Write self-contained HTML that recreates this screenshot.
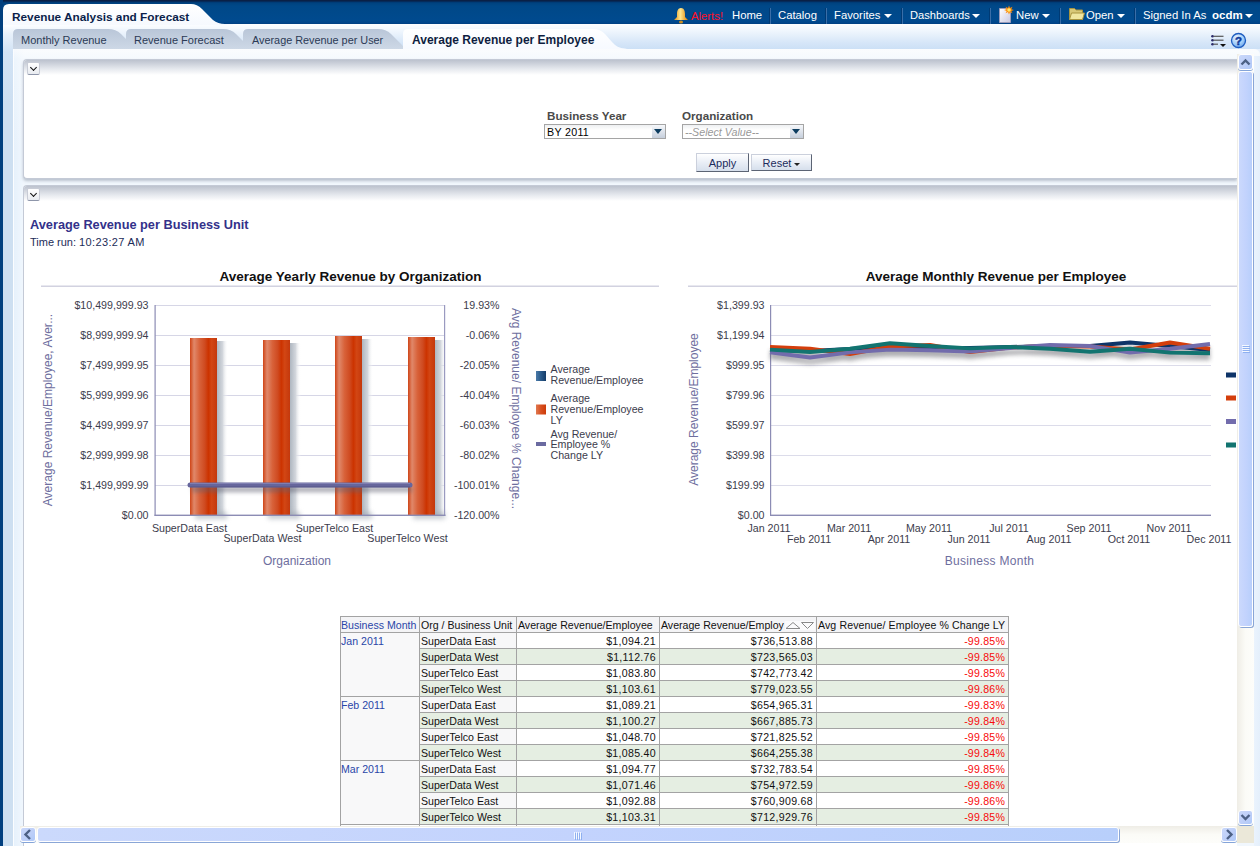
<!DOCTYPE html>
<html><head><meta charset="utf-8">
<style>
*{box-sizing:border-box;margin:0;padding:0}
html,body{width:1260px;height:846px;overflow:hidden;background:#e8f1fc;font-family:"Liberation Sans",sans-serif;}
.a{position:absolute}
#hdr{left:0;top:0;width:1260px;height:24px;background:linear-gradient(#0a2046 0px,#0a2046 1px,#003670 2px,#00427f 3px,#004888 6px,#004a8e 20px,#00458a 23px,#003e80 24px)}
#lstrip{left:0;top:0;width:3px;height:846px;background:#003f7e}
#lpanel{left:3px;top:24px;width:10px;height:822px;background:linear-gradient(#ffffff 0px,#e8f1fb 10px,#d2e3f5 28px,#cddff1 80px,#cddff1 846px)}
#tabbar{left:13px;top:24px;width:1247px;height:25px;background:linear-gradient(#fdfeff,#eef5fd 30%,#d6e6f8 75%,#cce0f6)}
#content{left:13px;top:49px;width:1247px;height:797px;border-top-right-radius:6px;border-left:1px solid #fbfdff;background:linear-gradient(90deg,rgba(255,255,255,0) 0,rgba(255,255,255,0.45) 10px),linear-gradient(#f7fafe 0px,#edf5fd 10px,#e6f1fc 100px)}
#rstrip{left:1254px;top:56px;width:6px;height:790px;background:linear-gradient(90deg,#eaf3fd,#e4effb)}
.nav{color:#fff;font-size:11.3px;top:9px;line-height:13px;white-space:nowrap}
.sep{top:8px;width:2px;height:16px;border-left:1px solid #003a74;border-right:1px solid #3a6ea8}
.arr{top:14px;width:0;height:0;border-left:4px solid transparent;border-right:4px solid transparent;border-top:4.5px solid #fff}
.tab{top:30px;height:20px;font-size:11px;color:#2b3a55;line-height:20px;white-space:nowrap}
.cbtn{width:13px;height:13px;border:1px solid #c8ccd6;border-bottom-color:#8e96aa;border-radius:2px;background:linear-gradient(#ffffff,#e8ebf0)}
.cbtn:after{content:"";position:absolute;left:3px;top:2px;width:4px;height:4px;border-right:1.5px solid #111;border-bottom:1.5px solid #111;transform:rotate(45deg)}
.plbl{font-size:11.65px;font-weight:bold;color:#4a4a4a;white-space:nowrap}
.sel{height:15px;border:1px solid #a5a5a5;background:linear-gradient(#eef0f2,#fff 40%);line-height:12px;padding-left:2px;white-space:nowrap}
.sel i{position:absolute;right:0;top:0;width:13px;height:13px;background:linear-gradient(#f6f8fb,#c6cfdc)}
.sel i:after{content:"";position:absolute;left:2px;top:4px;border-left:4.5px solid transparent;border-right:4.5px solid transparent;border-top:5px solid #0d3d60}
.btn{height:19px;border:1px solid;border-color:#cbd0dc #5c6474 #5c6474 #cbd0dc;background:linear-gradient(#ffffff,#e9eef6 50%,#d6dfec);font-size:11px;color:#1c2c5c;text-align:center;line-height:19px;white-space:nowrap}
.barr{display:inline-block;width:0;height:0;border-left:3px solid transparent;border-right:3px solid transparent;border-top:3px solid #222;vertical-align:middle}
.tt{font-size:10.6px;line-height:12px;color:#111;white-space:nowrap}
.sbb{border:1px solid #fff;border-radius:3px;box-shadow:0 1px 0 #84a4d8;background:linear-gradient(135deg,#cad8fa,#bccef8 60%,#aec8f8)}
.sbt{border:1px solid #fff;border-radius:3px;box-shadow:1px 1px 0 #8aa6d6;background:linear-gradient(90deg,#cbd9fc,#c3d3fd 50%,#b8cffb)}
</style></head><body>
<div id="hdr" class="a"></div>
<div id="tabbar" class="a"></div>
<div id="content" class="a"></div>
<div id="lpanel" class="a"></div>
<div id="lstrip" class="a"></div>
<div id="rstrip" class="a"></div>

<!-- title tab -->
<svg class="a" style="left:3px;top:3px" width="230" height="22">
<defs><linearGradient id="tt" x1="0" y1="0" x2="0" y2="1"><stop offset="0" stop-color="#ffffff"/><stop offset="1" stop-color="#f6f9fe"/></linearGradient></defs>
<path d="M0 22 L0 7 Q0 1 6 1 L188 1 Q194 1 199 6 L210 17 Q215 21 222 21 L230 21 L230 22 Z" fill="url(#tt)"/>
</svg>
<div class="a" style="left:12px;top:10px;font-size:11.8px;font-weight:bold;color:#0a1e4a;white-space:nowrap">Revenue Analysis and Forecast</div>

<!-- nav -->
<svg class="a" style="left:673px;top:7px" width="16" height="17" viewBox="0 0 16 17">
<defs><linearGradient id="bell" x1="0" y1="0" x2="1" y2="0"><stop offset="0" stop-color="#e08a10"/><stop offset="0.45" stop-color="#ffe890"/><stop offset="1" stop-color="#e08000"/></linearGradient></defs>
<path d="M8 1 C5 1 4 4 4 7 L4 10 L1 13 L15 13 L12 10 L12 7 C12 4 11 1 8 1Z" fill="url(#bell)"/>
<ellipse cx="8" cy="15" rx="2" ry="1.5" fill="#d09020"/>
</svg>
<div class="a nav" style="left:691px;top:10px;color:#ff1028">Alerts!</div>
<div class="a nav" style="left:732px">Home</div>
<div class="a sep" style="left:769px"></div>
<div class="a nav" style="left:778px">Catalog</div>
<div class="a sep" style="left:825px"></div>
<div class="a nav" style="left:834px">Favorites</div>
<div class="a arr" style="left:884px"></div>
<div class="a sep" style="left:901px"></div>
<div class="a nav" style="left:910px;font-size:11.1px">Dashboards</div>
<div class="a arr" style="left:972px"></div>
<div class="a sep" style="left:989px"></div>
<svg class="a" style="left:998px;top:5px" width="17" height="18" viewBox="0 0 17 18">
<defs><linearGradient id="pg" x1="0" y1="0" x2="1" y2="1"><stop offset="0" stop-color="#ffffff"/><stop offset="1" stop-color="#c8c8e0"/></linearGradient></defs>
<path d="M1.5 3.5 L10 3.5 L12.5 6 L12.5 17.5 L1.5 17.5 Z" fill="url(#pg)" stroke="#9a9ab8" stroke-width="1"/>
<path d="M11 0.5 L12 3 L14.5 1.8 L13.3 4.2 L16 5 L13.3 5.9 L14.5 8.3 L12 7.1 L11 9.5 L10 7.1 L7.5 8.3 L8.7 5.9 L6 5 L8.7 4.2 L7.5 1.8 L10 3 Z" fill="#ff8a00"/>
<circle cx="11" cy="5" r="1.8" fill="#ffe870"/>
</svg>
<div class="a nav" style="left:1016px">New</div>
<div class="a arr" style="left:1042px"></div>
<div class="a sep" style="left:1059px"></div>
<svg class="a" style="left:1069px;top:7px" width="16" height="13" viewBox="0 0 16 13">
<path d="M0.5 1.5 L5.5 1.5 L7 3 L13.5 3 L13.5 12.5 L0.5 12.5 Z" fill="#d8c878" stroke="#a89440"/>
<path d="M2.5 6 L15.5 6 L13.5 12.5 L0.5 12.5 Z" fill="#f0e6a0" stroke="#a89440"/>
</svg>
<div class="a nav" style="left:1086px">Open</div>
<div class="a arr" style="left:1117px"></div>
<div class="a sep" style="left:1134px"></div>
<div class="a nav" style="left:1143px">Signed In As</div>
<div class="a nav" style="left:1212px;font-weight:bold;font-size:11.5px">ocdm</div>
<div class="a arr" style="left:1245px"></div>

<!-- tabs -->
<svg class="a" style="left:13px;top:29px" width="620" height="20">
<defs>
<linearGradient id="tg" x1="0" y1="0" x2="0" y2="1"><stop offset="0" stop-color="#b9c6d8"/><stop offset="1" stop-color="#cdd8e6"/></linearGradient>
<linearGradient id="ta" x1="0" y1="0" x2="0" y2="1"><stop offset="0" stop-color="#ffffff"/><stop offset="1" stop-color="#f7faff"/></linearGradient>
</defs>
<path d="M0 20 L0 5 Q0 0 5 0 L95 0 Q103 0 108 5 L118 15 Q121 18 126 18 L126 20 Z" fill="url(#tg)"/>
<path d="M113 20 L113 5 Q113 0 118 0 L210 0 Q218 0 223 5 L230 12 L230 20 Z" fill="url(#tg)"/>
<path d="M230 20 L230 5 Q230 0 235 0 L365 0 Q373 0 378 5 L388 15 Q391 18 392 20 Z" fill="url(#tg)"/>
<path d="M390 20 L390 5 Q390 0 395 0 L580 0 Q587 0 592 5 L599 13 Q604 19 612 19.5 L614 20 Z" fill="url(#ta)"/>
</svg>
<div class="a tab" style="left:21px">Monthly Revenue</div>
<div class="a tab" style="left:134px">Revenue Forecast</div>
<div class="a tab" style="left:252px;font-size:10.85px">Average Revenue per User</div>
<div class="a tab" style="left:412px;font-weight:bold;color:#0e1e40;font-size:12px">Average Revenue per Employee</div>


<!-- prompt section -->
<div class="a" style="left:23px;top:59px;width:1214px;height:120px;background:#fff;border:1px solid #c4cad6;border-right:none;border-radius:4px 0 0 4px;box-shadow:0 2px 3px rgba(120,130,150,0.45)"></div>
<div class="a" style="left:24px;top:60px;width:1213px;height:15px;background:linear-gradient(#bcc2ce,#e6e9ee 60%,#ffffff);border-radius:3px 0 0 0"></div>
<div class="a cbtn" style="left:27px;top:62px"></div>

<div class="a plbl" style="left:547px;top:109px">Business Year</div>
<div class="a plbl" style="left:682px;top:109px">Organization</div>
<div class="a sel" style="left:544px;top:124px;width:122px"><span style="color:#000;font-size:10.7px;letter-spacing:0.3px">BY 2011</span><i></i></div>
<div class="a sel" style="left:682px;top:124px;width:122px"><span style="color:#999;font-style:italic;font-size:10.7px">--Select Value--</span><i></i></div>
<div class="a btn" style="left:696px;top:153px;width:53px">Apply</div>
<div class="a btn" style="left:751px;top:154px;width:61px;height:17px;line-height:17px">Reset <b class="barr"></b></div>

<!-- section 2 -->
<div class="a" style="left:23px;top:185px;width:1214px;height:700px;background:#fff;border:1px solid #c4cad6;border-right:none;border-radius:4px 0 0 0"></div>
<div class="a" style="left:24px;top:186px;width:1213px;height:15px;background:linear-gradient(#bcc2ce,#e6e9ee 60%,#ffffff);border-radius:3px 0 0 0"></div>
<div class="a cbtn" style="left:27px;top:188px"></div>
<div class="a" style="left:30px;top:217px;font-size:12.75px;font-weight:bold;color:#33318a;white-space:nowrap">Average Revenue per Business Unit</div>
<div class="a" style="left:30px;top:236px;font-size:11px;color:#1c2c58;white-space:nowrap">Time run: <span style="letter-spacing:0.35px">10:23:27 AM</span></div>

<!--ICONS-->
<svg class="a" style="left:1210px;top:33px" width="18" height="16" viewBox="0 0 18 16">
<g fill="#2a2a6a"><circle cx="2.5" cy="3.3" r="1.3"/><circle cx="2.5" cy="7.2" r="1.3"/><circle cx="2.5" cy="11.2" r="1.3"/></g>
<g stroke="#555" stroke-width="1.2"><path d="M3.5 3.3 H13.5"/><path d="M3.5 7.2 H13.5"/><path d="M3.5 11.2 H8"/></g>
<path d="M10 11 L16 11 L13 14 Z" fill="#111"/>
</svg>
<svg class="a" style="left:1230px;top:32px" width="18" height="18" viewBox="0 0 18 18">
<defs><radialGradient id="hg" cx="0.4" cy="0.3" r="0.8"><stop offset="0" stop-color="#e8f4ff"/><stop offset="0.6" stop-color="#9ccaf8"/><stop offset="1" stop-color="#5a9ae8"/></radialGradient></defs>
<circle cx="8.5" cy="8.5" r="7" fill="url(#hg)" stroke="#1e5cc0" stroke-width="1.3"/>
<text x="8.5" y="12.8" font-family="Liberation Sans" font-weight="bold" font-size="11.5" text-anchor="middle" fill="#0e3c9c" stroke="#0e3c9c" stroke-width="0.5">?</text>
</svg>
<!--/ICONS-->
<!--CHARTS--><svg class="a" style="left:24px;top:255px" width="1213" height="345" font-family="Liberation Sans">
<defs>
<linearGradient id="bar" x1="0" y1="0" x2="1" y2="0">
<stop offset="0" stop-color="#cf4416"/><stop offset="0.15" stop-color="#e0886a"/><stop offset="0.35" stop-color="#d8623a"/>
<stop offset="0.55" stop-color="#cf4a20"/><stop offset="0.68" stop-color="#cc3300"/><stop offset="0.8" stop-color="#d24614"/><stop offset="1" stop-color="#c4380c"/></linearGradient>
<linearGradient id="bsh" x1="0" y1="0" x2="1" y2="0"><stop offset="0" stop-color="#aeb6c0"/><stop offset="0.5" stop-color="#d2d6dc"/><stop offset="1" stop-color="#ffffff" stop-opacity="0"/></linearGradient>
<filter id="bblur" x="-50%" y="-100%" width="200%" height="300%"><feGaussianBlur stdDeviation="2.5"/></filter>
<linearGradient id="bshb" x1="0" y1="0" x2="0" y2="1"><stop offset="0" stop-color="#c8cdd4"/><stop offset="1" stop-color="#ffffff" stop-opacity="0"/></linearGradient>
<linearGradient id="lg1" x1="0" y1="0" x2="1" y2="0"><stop offset="0" stop-color="#4a7aa8"/><stop offset="0.5" stop-color="#2a5a8a"/><stop offset="1" stop-color="#143c68"/></linearGradient>
<linearGradient id="lg2" x1="0" y1="0" x2="1" y2="0"><stop offset="0" stop-color="#e07850"/><stop offset="0.5" stop-color="#d85020"/><stop offset="1" stop-color="#cc3a08"/></linearGradient>
<filter id="blur" x="-20%" y="-200%" width="140%" height="500%"><feGaussianBlur stdDeviation="2.2"/></filter>
<filter id="blur2" x="-5%" y="-100%" width="110%" height="300%"><feGaussianBlur stdDeviation="2"/></filter>
</defs>
<g transform="translate(-24,-255)">
<text x="350.5" y="281" font-size="13.5" text-anchor="middle" fill="#111"  font-weight="bold">Average Yearly Revenue by Organization</text>
<rect x="41" y="285.5" width="618" height="1.5" fill="#d2d2e0"/>
<rect x="155" y="305" width="290" height="1" fill="#d6d6e6"/>
<rect x="155" y="335" width="290" height="1" fill="#d6d6e6"/>
<rect x="155" y="365" width="290" height="1" fill="#d6d6e6"/>
<rect x="155" y="395" width="290" height="1" fill="#d6d6e6"/>
<rect x="155" y="425" width="290" height="1" fill="#d6d6e6"/>
<rect x="155" y="455" width="290" height="1" fill="#d6d6e6"/>
<rect x="155" y="485" width="290" height="1" fill="#d6d6e6"/>
<text x="148.5" y="308.5" font-size="10.67" text-anchor="end" fill="#3c3c4c" >$10,499,999.93</text>
<text x="499.5" y="308.5" font-size="10.67" text-anchor="end" fill="#3c3c4c" >19.93%</text>
<text x="148.5" y="338.5" font-size="10.67" text-anchor="end" fill="#3c3c4c" >$8,999,999.94</text>
<text x="499.5" y="338.5" font-size="10.67" text-anchor="end" fill="#3c3c4c" >-0.06%</text>
<text x="148.5" y="368.5" font-size="10.67" text-anchor="end" fill="#3c3c4c" >$7,499,999.95</text>
<text x="499.5" y="368.5" font-size="10.67" text-anchor="end" fill="#3c3c4c" >-20.05%</text>
<text x="148.5" y="398.5" font-size="10.67" text-anchor="end" fill="#3c3c4c" >$5,999,999.96</text>
<text x="499.5" y="398.5" font-size="10.67" text-anchor="end" fill="#3c3c4c" >-40.04%</text>
<text x="148.5" y="428.5" font-size="10.67" text-anchor="end" fill="#3c3c4c" >$4,499,999.97</text>
<text x="499.5" y="428.5" font-size="10.67" text-anchor="end" fill="#3c3c4c" >-60.03%</text>
<text x="148.5" y="458.5" font-size="10.67" text-anchor="end" fill="#3c3c4c" >$2,999,999.98</text>
<text x="499.5" y="458.5" font-size="10.67" text-anchor="end" fill="#3c3c4c" >-80.02%</text>
<text x="148.5" y="488.5" font-size="10.67" text-anchor="end" fill="#3c3c4c" >$1,499,999.99</text>
<text x="499.5" y="488.5" font-size="10.67" text-anchor="end" fill="#3c3c4c" >-100.01%</text>
<text x="148.5" y="518.5" font-size="10.67" text-anchor="end" fill="#3c3c4c" >$0.00</text>
<text x="499.5" y="518.5" font-size="10.67" text-anchor="end" fill="#3c3c4c" >-120.00%</text>
<rect x="217" y="341" width="11" height="174" fill="url(#bsh)"/>
<rect x="195" y="512" width="32" height="7" fill="#9aa2ac" opacity="0.55" filter="url(#bblur)"/>
<rect x="290" y="343" width="11" height="172" fill="url(#bsh)"/>
<rect x="268" y="512" width="32" height="7" fill="#9aa2ac" opacity="0.55" filter="url(#bblur)"/>
<rect x="362" y="339" width="11" height="176" fill="url(#bsh)"/>
<rect x="340" y="512" width="32" height="7" fill="#9aa2ac" opacity="0.55" filter="url(#bblur)"/>
<rect x="435" y="340" width="11" height="175" fill="url(#bsh)"/>
<rect x="413" y="512" width="32" height="7" fill="#9aa2ac" opacity="0.55" filter="url(#bblur)"/>
<rect x="190" y="338" width="27" height="177" fill="url(#bar)"/>
<rect x="263" y="340" width="27" height="175" fill="url(#bar)"/>
<rect x="335" y="336" width="27" height="179" fill="url(#bar)"/>
<rect x="408" y="337" width="27" height="178" fill="url(#bar)"/>
<rect x="154.5" y="305" width="1.2" height="211" fill="#8c8cb4"/>
<rect x="444" y="305" width="1.2" height="211" fill="#9a9ac0"/>
<rect x="154.5" y="514.6" width="291" height="1.4" fill="#8c8cb4"/>
<rect x="192" y="487" width="220" height="5" fill="#606070" opacity="0.55" filter="url(#blur)"/>
<line x1="190" y1="485" x2="410" y2="485" stroke="#66669c" stroke-width="5" stroke-linecap="round"/>
<line x1="190" y1="483.5" x2="410" y2="483.5" stroke="#8a8abc" stroke-width="1" opacity="0.7"/>
<line x1="190" y1="486.9" x2="410" y2="486.9" stroke="#50507e" stroke-width="1" opacity="0.6"/>
<text x="189.5" y="531.6" font-size="10.67" text-anchor="middle" fill="#3c3c4c" >SuperData East</text>
<text x="262.5" y="542.4" font-size="10.67" text-anchor="middle" fill="#3c3c4c" >SuperData West</text>
<text x="334.5" y="531.6" font-size="10.67" text-anchor="middle" fill="#3c3c4c" >SuperTelco East</text>
<text x="407.5" y="542.4" font-size="10.67" text-anchor="middle" fill="#3c3c4c" >SuperTelco West</text>
<text x="297" y="564.5" font-size="12" text-anchor="middle" fill="#6e6e9e" >Organization</text>
<text x="0" y="0" font-size="12" text-anchor="middle" fill="#6e6e9e"  transform="translate(51.5,410) rotate(-90)">Average Revenue/Employee, Aver...</text>
<text x="0" y="0" font-size="12" text-anchor="middle" fill="#6e6e9e"  transform="translate(512,408.5) rotate(90)">Avg Revenue/ Employee % Change...</text>
<rect x="536" y="371" width="10" height="10" fill="url(#lg1)"/>
<text x="550.5" y="373" font-size="10.67" text-anchor="start" fill="#3c3c4c" >Average</text>
<text x="550.5" y="383.5" font-size="10.67" text-anchor="start" fill="#3c3c4c" >Revenue/Employee</text>
<rect x="536" y="404.5" width="10" height="10" fill="url(#lg2)"/>
<text x="550.5" y="402" font-size="10.67" text-anchor="start" fill="#3c3c4c" >Average</text>
<text x="550.5" y="412.5" font-size="10.67" text-anchor="start" fill="#3c3c4c" >Revenue/Employee</text>
<text x="550.5" y="423.8" font-size="10.67" text-anchor="start" fill="#3c3c4c" >LY</text>
<rect x="536" y="442" width="10" height="4" fill="#6a6aa0"/>
<text x="550.5" y="437.5" font-size="10.67" text-anchor="start" fill="#3c3c4c" >Avg Revenue/</text>
<text x="550.5" y="448.2" font-size="10.67" text-anchor="start" fill="#3c3c4c" >Employee %</text>
<text x="550.5" y="458.8" font-size="10.67" text-anchor="start" fill="#3c3c4c" >Change LY</text>
<text x="996" y="281" font-size="13.5" text-anchor="middle" fill="#111"  font-weight="bold">Average Monthly Revenue per Employee</text>
<rect x="688" y="285.5" width="560" height="1.5" fill="#d2d2e0"/>
<rect x="771" y="305" width="440" height="1" fill="#dcdcea"/>
<rect x="771" y="335" width="440" height="1" fill="#dcdcea"/>
<rect x="771" y="365" width="440" height="1" fill="#dcdcea"/>
<rect x="771" y="395" width="440" height="1" fill="#dcdcea"/>
<rect x="771" y="425" width="440" height="1" fill="#dcdcea"/>
<rect x="771" y="455" width="440" height="1" fill="#dcdcea"/>
<rect x="771" y="485" width="440" height="1" fill="#dcdcea"/>
<text x="764.5" y="308.5" font-size="10.67" text-anchor="end" fill="#3c3c4c" >$1,399.93</text>
<text x="764.5" y="338.5" font-size="10.67" text-anchor="end" fill="#3c3c4c" >$1,199.94</text>
<text x="764.5" y="368.5" font-size="10.67" text-anchor="end" fill="#3c3c4c" >$999.95</text>
<text x="764.5" y="398.5" font-size="10.67" text-anchor="end" fill="#3c3c4c" >$799.96</text>
<text x="764.5" y="428.5" font-size="10.67" text-anchor="end" fill="#3c3c4c" >$599.97</text>
<text x="764.5" y="458.5" font-size="10.67" text-anchor="end" fill="#3c3c4c" >$399.98</text>
<text x="764.5" y="488.5" font-size="10.67" text-anchor="end" fill="#3c3c4c" >$199.99</text>
<text x="764.5" y="518.5" font-size="10.67" text-anchor="end" fill="#3c3c4c" >$0.00</text>
<rect x="770" y="305" width="1.2" height="211" fill="#8c8cb4"/>
<rect x="770" y="514.6" width="441" height="1.4" fill="#8c8cb4"/>
<text x="769" y="532" font-size="10.67" text-anchor="middle" fill="#3c3c4c" >Jan 2011</text>
<text x="809" y="543" font-size="10.67" text-anchor="middle" fill="#3c3c4c" >Feb 2011</text>
<text x="849" y="532" font-size="10.67" text-anchor="middle" fill="#3c3c4c" >Mar 2011</text>
<text x="889" y="543" font-size="10.67" text-anchor="middle" fill="#3c3c4c" >Apr 2011</text>
<text x="929" y="532" font-size="10.67" text-anchor="middle" fill="#3c3c4c" >May 2011</text>
<text x="969" y="543" font-size="10.67" text-anchor="middle" fill="#3c3c4c" >Jun 2011</text>
<text x="1009" y="532" font-size="10.67" text-anchor="middle" fill="#3c3c4c" >Jul 2011</text>
<text x="1049" y="543" font-size="10.67" text-anchor="middle" fill="#3c3c4c" >Aug 2011</text>
<text x="1089" y="532" font-size="10.67" text-anchor="middle" fill="#3c3c4c" >Sep 2011</text>
<text x="1129" y="543" font-size="10.67" text-anchor="middle" fill="#3c3c4c" >Oct 2011</text>
<text x="1169" y="532" font-size="10.67" text-anchor="middle" fill="#3c3c4c" >Nov 2011</text>
<text x="1209" y="543" font-size="10.67" text-anchor="middle" fill="#3c3c4c" >Dec 2011</text>
<text x="989.5" y="564.5" font-size="12" text-anchor="middle" fill="#6e6e9e"  letter-spacing="0.3">Business Month</text>
<text x="0" y="0" font-size="12" text-anchor="middle" fill="#6e6e9e"  transform="translate(698,409.5) rotate(-90)">Average Revenue/Employee</text>
<g filter="url(#blur2)" opacity="0.42">
<polyline points="770,355 810,356 850,354 890,352 930,353 970,353 1010,352 1050,351 1090,351 1130,347.5 1170,351 1210,355" fill="none" stroke="#404048" stroke-width="4"/>
<polyline points="770,352 810,353.7 850,359 890,351.5 930,350 970,357 1010,352.5 1050,351 1090,351.5 1130,354.5 1170,347.5 1210,353.8" fill="none" stroke="#404048" stroke-width="4"/>
<polyline points="770,357.4 810,362.5 850,357.4 890,354.6 930,355.2 970,356.5 1010,353 1050,350 1090,351 1130,357.6 1170,353.8 1210,349" fill="none" stroke="#404048" stroke-width="4"/>
<polyline points="770,354.6 810,357 850,353.7 890,348.3 930,351 970,353.4 1010,351.9 1050,353.8 1090,356.7 1130,353.8 1170,357.6 1210,358.2" fill="none" stroke="#404048" stroke-width="4"/>
</g>
<polyline points="770,350 810,351 850,349 890,347 930,348 970,348 1010,347 1050,346 1090,346 1130,342.5 1170,346 1210,350" fill="none" stroke="#0e3468" stroke-width="3.9" stroke-linejoin="round"/>
<polyline points="770,347 810,348.7 850,354 890,346.5 930,345 970,352 1010,347.5 1050,346 1090,346.5 1130,349.5 1170,342.5 1210,348.8" fill="none" stroke="#d43e0c" stroke-width="3.9" stroke-linejoin="round"/>
<polyline points="770,352.4 810,357.5 850,352.4 890,349.6 930,350.2 970,351.5 1010,348 1050,345 1090,346 1130,352.6 1170,348.8 1210,344" fill="none" stroke="#726cac" stroke-width="3.9" stroke-linejoin="round"/>
<polyline points="770,349.6 810,352 850,348.7 890,343.3 930,346 970,348.4 1010,346.9 1050,348.8 1090,351.7 1130,348.8 1170,352.6 1210,353.2" fill="none" stroke="#127470" stroke-width="3.9" stroke-linejoin="round"/>
<rect x="1226" y="372.5" width="10" height="5" fill="#0e3468"/>
<rect x="1226" y="395.5" width="10" height="5" fill="#d43e0c"/>
<rect x="1226" y="419.0" width="10" height="5" fill="#726cac"/>
<rect x="1226" y="442.5" width="10" height="5" fill="#127470"/>
</g></svg><!--/CHARTS-->
<!--TABLE--><div class="a" style="left:0;top:0;width:1237px;height:826px;overflow:hidden">
<div class="a" style="left:340px;top:616px;width:669px;height:17px;background:#f4f4f6"></div>
<div class="a" style="left:340px;top:632px;width:79px;height:64px;background:#f8f8f9"></div>
<div class="a" style="left:419px;top:632px;width:97px;height:16px;background:#f7f7f8"></div>
<div class="a" style="left:516px;top:632px;width:492px;height:16px;background:#ffffff"></div>
<div class="a" style="left:419px;top:648px;width:97px;height:16px;background:#e5eee2"></div>
<div class="a" style="left:516px;top:648px;width:492px;height:16px;background:#e5eee2"></div>
<div class="a" style="left:419px;top:664px;width:97px;height:16px;background:#f7f7f8"></div>
<div class="a" style="left:516px;top:664px;width:492px;height:16px;background:#ffffff"></div>
<div class="a" style="left:419px;top:680px;width:97px;height:16px;background:#e5eee2"></div>
<div class="a" style="left:516px;top:680px;width:492px;height:16px;background:#e5eee2"></div>
<div class="a" style="left:340px;top:696px;width:79px;height:64px;background:#f8f8f9"></div>
<div class="a" style="left:419px;top:696px;width:97px;height:16px;background:#f7f7f8"></div>
<div class="a" style="left:516px;top:696px;width:492px;height:16px;background:#ffffff"></div>
<div class="a" style="left:419px;top:712px;width:97px;height:16px;background:#e5eee2"></div>
<div class="a" style="left:516px;top:712px;width:492px;height:16px;background:#e5eee2"></div>
<div class="a" style="left:419px;top:728px;width:97px;height:16px;background:#f7f7f8"></div>
<div class="a" style="left:516px;top:728px;width:492px;height:16px;background:#ffffff"></div>
<div class="a" style="left:419px;top:744px;width:97px;height:16px;background:#e5eee2"></div>
<div class="a" style="left:516px;top:744px;width:492px;height:16px;background:#e5eee2"></div>
<div class="a" style="left:340px;top:760px;width:79px;height:64px;background:#f8f8f9"></div>
<div class="a" style="left:419px;top:760px;width:97px;height:16px;background:#f7f7f8"></div>
<div class="a" style="left:516px;top:760px;width:492px;height:16px;background:#ffffff"></div>
<div class="a" style="left:419px;top:776px;width:97px;height:16px;background:#e5eee2"></div>
<div class="a" style="left:516px;top:776px;width:492px;height:16px;background:#e5eee2"></div>
<div class="a" style="left:419px;top:792px;width:97px;height:16px;background:#f7f7f8"></div>
<div class="a" style="left:516px;top:792px;width:492px;height:16px;background:#ffffff"></div>
<div class="a" style="left:419px;top:808px;width:97px;height:16px;background:#e5eee2"></div>
<div class="a" style="left:516px;top:808px;width:492px;height:16px;background:#e5eee2"></div>
<div class="a" style="left:340px;top:616px;width:669px;height:1px;background:#a3a3a3"></div>
<div class="a" style="left:340px;top:632px;width:669px;height:1px;background:#a3a3a3"></div>
<div class="a" style="left:419px;top:648px;width:590px;height:1px;background:#a3a3a3"></div>
<div class="a" style="left:419px;top:664px;width:590px;height:1px;background:#a3a3a3"></div>
<div class="a" style="left:419px;top:680px;width:590px;height:1px;background:#a3a3a3"></div>
<div class="a" style="left:340px;top:696px;width:669px;height:1px;background:#a3a3a3"></div>
<div class="a" style="left:419px;top:712px;width:590px;height:1px;background:#a3a3a3"></div>
<div class="a" style="left:419px;top:728px;width:590px;height:1px;background:#a3a3a3"></div>
<div class="a" style="left:419px;top:744px;width:590px;height:1px;background:#a3a3a3"></div>
<div class="a" style="left:340px;top:760px;width:669px;height:1px;background:#a3a3a3"></div>
<div class="a" style="left:419px;top:776px;width:590px;height:1px;background:#a3a3a3"></div>
<div class="a" style="left:419px;top:792px;width:590px;height:1px;background:#a3a3a3"></div>
<div class="a" style="left:419px;top:808px;width:590px;height:1px;background:#a3a3a3"></div>
<div class="a" style="left:340px;top:824px;width:669px;height:1px;background:#a3a3a3"></div>
<div class="a" style="left:340px;top:616px;width:1px;height:212px;background:#a3a3a3"></div>
<div class="a" style="left:419px;top:616px;width:1px;height:212px;background:#a3a3a3"></div>
<div class="a" style="left:516px;top:616px;width:1px;height:212px;background:#a3a3a3"></div>
<div class="a" style="left:659px;top:616px;width:1px;height:212px;background:#a3a3a3"></div>
<div class="a" style="left:816px;top:616px;width:1px;height:212px;background:#a3a3a3"></div>
<div class="a" style="left:1008px;top:616px;width:1px;height:212px;background:#a3a3a3"></div>
<div class="a tt" style="left:341px;top:619px;color:#2a46a8">Business Month</div>
<div class="a tt" style="left:421px;top:619px;">Org / Business Unit</div>
<div class="a tt" style="left:518px;top:619px;">Average Revenue/Employee</div>
<div class="a tt" style="left:661px;top:619px;">Average Revenue/Employ</div>
<div class="a tt" style="left:818px;top:619px;letter-spacing:0.1px">Avg Revenue/ Employee % Change LY</div>
<svg class="a" style="left:785px;top:621px" width="30" height="9"><rect x="0" y="0" width="30" height="9" fill="#fbfbfc"/><path d="M1 7.5 L8 1.5 L15 7.5 Z" fill="none" stroke="#8a8a8a" stroke-width="1"/><path d="M16.5 1.5 L28.5 1.5 L22.5 7.5 Z" fill="none" stroke="#8a8a8a" stroke-width="1"/></svg>
<div class="a tt" style="left:341px;top:635px;color:#2a46a8">Jan 2011</div>
<div class="a tt" style="left:421px;top:635px;">SuperData East</div>
<div class="a tt" style="right:581px;top:635px;letter-spacing:0.3px">$1,094.21</div>
<div class="a tt" style="right:424px;top:635px;letter-spacing:0.3px">$736,513.88</div>
<div class="a tt" style="right:232px;top:635px;color:#f80a0a;letter-spacing:0.2px">-99.85%</div>
<div class="a tt" style="left:421px;top:651px;">SuperData West</div>
<div class="a tt" style="right:581px;top:651px;letter-spacing:0.3px">$1,112.76</div>
<div class="a tt" style="right:424px;top:651px;letter-spacing:0.3px">$723,565.03</div>
<div class="a tt" style="right:232px;top:651px;color:#f80a0a;letter-spacing:0.2px">-99.85%</div>
<div class="a tt" style="left:421px;top:667px;">SuperTelco East</div>
<div class="a tt" style="right:581px;top:667px;letter-spacing:0.3px">$1,083.80</div>
<div class="a tt" style="right:424px;top:667px;letter-spacing:0.3px">$742,773.42</div>
<div class="a tt" style="right:232px;top:667px;color:#f80a0a;letter-spacing:0.2px">-99.85%</div>
<div class="a tt" style="left:421px;top:683px;">SuperTelco West</div>
<div class="a tt" style="right:581px;top:683px;letter-spacing:0.3px">$1,103.61</div>
<div class="a tt" style="right:424px;top:683px;letter-spacing:0.3px">$779,023.55</div>
<div class="a tt" style="right:232px;top:683px;color:#f80a0a;letter-spacing:0.2px">-99.86%</div>
<div class="a tt" style="left:341px;top:699px;color:#2a46a8">Feb 2011</div>
<div class="a tt" style="left:421px;top:699px;">SuperData East</div>
<div class="a tt" style="right:581px;top:699px;letter-spacing:0.3px">$1,089.21</div>
<div class="a tt" style="right:424px;top:699px;letter-spacing:0.3px">$654,965.31</div>
<div class="a tt" style="right:232px;top:699px;color:#f80a0a;letter-spacing:0.2px">-99.83%</div>
<div class="a tt" style="left:421px;top:715px;">SuperData West</div>
<div class="a tt" style="right:581px;top:715px;letter-spacing:0.3px">$1,100.27</div>
<div class="a tt" style="right:424px;top:715px;letter-spacing:0.3px">$667,885.73</div>
<div class="a tt" style="right:232px;top:715px;color:#f80a0a;letter-spacing:0.2px">-99.84%</div>
<div class="a tt" style="left:421px;top:731px;">SuperTelco East</div>
<div class="a tt" style="right:581px;top:731px;letter-spacing:0.3px">$1,048.70</div>
<div class="a tt" style="right:424px;top:731px;letter-spacing:0.3px">$721,825.52</div>
<div class="a tt" style="right:232px;top:731px;color:#f80a0a;letter-spacing:0.2px">-99.85%</div>
<div class="a tt" style="left:421px;top:747px;">SuperTelco West</div>
<div class="a tt" style="right:581px;top:747px;letter-spacing:0.3px">$1,085.40</div>
<div class="a tt" style="right:424px;top:747px;letter-spacing:0.3px">$664,255.38</div>
<div class="a tt" style="right:232px;top:747px;color:#f80a0a;letter-spacing:0.2px">-99.84%</div>
<div class="a tt" style="left:341px;top:763px;color:#2a46a8">Mar 2011</div>
<div class="a tt" style="left:421px;top:763px;">SuperData East</div>
<div class="a tt" style="right:581px;top:763px;letter-spacing:0.3px">$1,094.77</div>
<div class="a tt" style="right:424px;top:763px;letter-spacing:0.3px">$732,783.54</div>
<div class="a tt" style="right:232px;top:763px;color:#f80a0a;letter-spacing:0.2px">-99.85%</div>
<div class="a tt" style="left:421px;top:779px;">SuperData West</div>
<div class="a tt" style="right:581px;top:779px;letter-spacing:0.3px">$1,071.46</div>
<div class="a tt" style="right:424px;top:779px;letter-spacing:0.3px">$754,972.59</div>
<div class="a tt" style="right:232px;top:779px;color:#f80a0a;letter-spacing:0.2px">-99.86%</div>
<div class="a tt" style="left:421px;top:795px;">SuperTelco East</div>
<div class="a tt" style="right:581px;top:795px;letter-spacing:0.3px">$1,092.88</div>
<div class="a tt" style="right:424px;top:795px;letter-spacing:0.3px">$760,909.68</div>
<div class="a tt" style="right:232px;top:795px;color:#f80a0a;letter-spacing:0.2px">-99.86%</div>
<div class="a tt" style="left:421px;top:811px;">SuperTelco West</div>
<div class="a tt" style="right:581px;top:811px;letter-spacing:0.3px">$1,103.31</div>
<div class="a tt" style="right:424px;top:811px;letter-spacing:0.3px">$712,929.76</div>
<div class="a tt" style="right:232px;top:811px;color:#f80a0a;letter-spacing:0.2px">-99.85%</div>
</div><!--/TABLE-->
<!--SCROLL-->
<div class="a" style="left:1237px;top:54px;width:17px;height:772px;background:linear-gradient(90deg,#efede6,#fbfbf7 50%,#fdfdfa)"></div>
<div class="a sbb" style="left:1238px;top:54px;width:15px;height:16px"><svg width="14" height="14" style="position:absolute;left:0px;top:0px"><path d="M2.5 9.5 L6.5 5.5 L10.5 9.5" fill="none" stroke="#4d6185" stroke-width="2.4"/></svg></div>
<div class="a sbt" style="left:1238px;top:71px;width:15px;height:556px"><svg width="14" height="10" style="position:absolute;left:0px;top:272px"><path d="M3 1.5 H10 M3 3.5 H10 M3 5.5 H10 M3 7.5 H10" stroke="#f4f8ff" stroke-width="1"/><path d="M4 2.5 H11 M4 4.5 H11 M4 6.5 H11 M4 8.5 H11" stroke="#8eb0f0" stroke-width="1"/></svg></div>
<div class="a sbb" style="left:1238px;top:810px;width:15px;height:15px"><svg width="14" height="13" style="position:absolute;left:0px;top:0px"><path d="M2.5 4 L6.5 8 L10.5 4" fill="none" stroke="#4d6185" stroke-width="2.4"/></svg></div>
<div class="a" style="left:20px;top:826px;width:1217px;height:17px;background:linear-gradient(#efede6,#fbfbf7 50%,#fdfdfa)"></div>
<div class="a sbb" style="left:20px;top:827px;width:16px;height:15px"><svg width="14" height="13" style="position:absolute;left:0px;top:0px"><path d="M9 2 L4.5 6.5 L9 11" fill="none" stroke="#4d6185" stroke-width="2.4"/></svg></div>
<div class="a sbt" style="left:37px;top:827px;width:1082px;height:15px"><svg width="12" height="12" style="position:absolute;left:535px;top:3px"><path d="M1.5 1 V8 M3.5 1 V8 M5.5 1 V8 M7.5 1 V8" stroke="#f4f8ff" stroke-width="1"/><path d="M2.5 2 V9 M4.5 2 V9 M6.5 2 V9 M8.5 2 V9" stroke="#8eb0f0" stroke-width="1"/></svg></div>
<div class="a sbb" style="left:1221px;top:827px;width:16px;height:15px"><svg width="14" height="13" style="position:absolute;left:0px;top:0px"><path d="M5 2 L9.5 6.5 L5 11" fill="none" stroke="#4d6185" stroke-width="2.4"/></svg></div>
<div class="a" style="left:1237px;top:826px;width:17px;height:17px;background:#ebe8d9"></div>
<!--/SCROLL-->
</body></html>
